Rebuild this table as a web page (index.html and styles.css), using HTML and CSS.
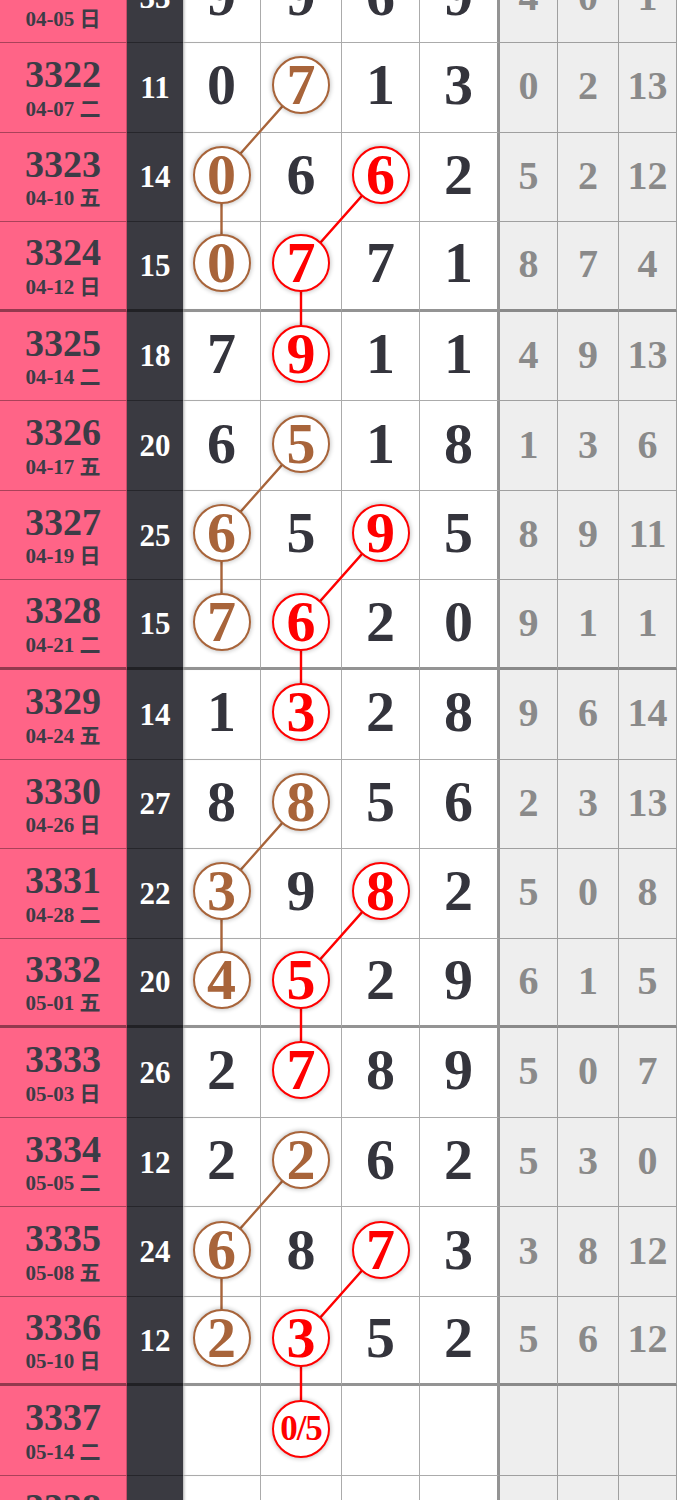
FILE: index.html
```html
<!DOCTYPE html>
<html lang="zh">
<head>
<meta charset="utf-8">
<title>走势图</title>
<link rel="stylesheet" href="styles.css">
</head>
<body>
<div class="board">
  <div class="row"><div class="c-no"><span class="no">3321</span><span class="date">04-05 日</span></div><div class="c-sum">33</div><div class="c-w">9</div><div class="c-w">9</div><div class="c-w">6</div><div class="c-w last">9</div><div class="c-g">4</div><div class="c-g">0</div><div class="c-g">1</div></div>
  <div class="row"><div class="c-no"><span class="no">3322</span><span class="date">04-07 二</span></div><div class="c-sum">11</div><div class="c-w">0</div><div class="c-w"><span class="ring brown">7</span></div><div class="c-w">1</div><div class="c-w last">3</div><div class="c-g">0</div><div class="c-g">2</div><div class="c-g">13</div></div>
  <div class="row"><div class="c-no"><span class="no">3323</span><span class="date">04-10 五</span></div><div class="c-sum">14</div><div class="c-w"><span class="ring brown">0</span></div><div class="c-w">6</div><div class="c-w"><span class="ring red">6</span></div><div class="c-w last">2</div><div class="c-g">5</div><div class="c-g">2</div><div class="c-g">12</div></div>
  <div class="row end"><div class="c-no"><span class="no">3324</span><span class="date">04-12 日</span></div><div class="c-sum">15</div><div class="c-w"><span class="ring brown">0</span></div><div class="c-w"><span class="ring red">7</span></div><div class="c-w">7</div><div class="c-w last">1</div><div class="c-g">8</div><div class="c-g">7</div><div class="c-g">4</div></div>
  <div class="row"><div class="c-no"><span class="no">3325</span><span class="date">04-14 二</span></div><div class="c-sum">18</div><div class="c-w">7</div><div class="c-w"><span class="ring red">9</span></div><div class="c-w">1</div><div class="c-w last">1</div><div class="c-g">4</div><div class="c-g">9</div><div class="c-g">13</div></div>
  <div class="row"><div class="c-no"><span class="no">3326</span><span class="date">04-17 五</span></div><div class="c-sum">20</div><div class="c-w">6</div><div class="c-w"><span class="ring brown">5</span></div><div class="c-w">1</div><div class="c-w last">8</div><div class="c-g">1</div><div class="c-g">3</div><div class="c-g">6</div></div>
  <div class="row"><div class="c-no"><span class="no">3327</span><span class="date">04-19 日</span></div><div class="c-sum">25</div><div class="c-w"><span class="ring brown">6</span></div><div class="c-w">5</div><div class="c-w"><span class="ring red">9</span></div><div class="c-w last">5</div><div class="c-g">8</div><div class="c-g">9</div><div class="c-g">11</div></div>
  <div class="row end"><div class="c-no"><span class="no">3328</span><span class="date">04-21 二</span></div><div class="c-sum">15</div><div class="c-w"><span class="ring brown">7</span></div><div class="c-w"><span class="ring red">6</span></div><div class="c-w">2</div><div class="c-w last">0</div><div class="c-g">9</div><div class="c-g">1</div><div class="c-g">1</div></div>
  <div class="row"><div class="c-no"><span class="no">3329</span><span class="date">04-24 五</span></div><div class="c-sum">14</div><div class="c-w">1</div><div class="c-w"><span class="ring red">3</span></div><div class="c-w">2</div><div class="c-w last">8</div><div class="c-g">9</div><div class="c-g">6</div><div class="c-g">14</div></div>
  <div class="row"><div class="c-no"><span class="no">3330</span><span class="date">04-26 日</span></div><div class="c-sum">27</div><div class="c-w">8</div><div class="c-w"><span class="ring brown">8</span></div><div class="c-w">5</div><div class="c-w last">6</div><div class="c-g">2</div><div class="c-g">3</div><div class="c-g">13</div></div>
  <div class="row"><div class="c-no"><span class="no">3331</span><span class="date">04-28 二</span></div><div class="c-sum">22</div><div class="c-w"><span class="ring brown">3</span></div><div class="c-w">9</div><div class="c-w"><span class="ring red">8</span></div><div class="c-w last">2</div><div class="c-g">5</div><div class="c-g">0</div><div class="c-g">8</div></div>
  <div class="row end"><div class="c-no"><span class="no">3332</span><span class="date">05-01 五</span></div><div class="c-sum">20</div><div class="c-w"><span class="ring brown">4</span></div><div class="c-w"><span class="ring red">5</span></div><div class="c-w">2</div><div class="c-w last">9</div><div class="c-g">6</div><div class="c-g">1</div><div class="c-g">5</div></div>
  <div class="row"><div class="c-no"><span class="no">3333</span><span class="date">05-03 日</span></div><div class="c-sum">26</div><div class="c-w">2</div><div class="c-w"><span class="ring red">7</span></div><div class="c-w">8</div><div class="c-w last">9</div><div class="c-g">5</div><div class="c-g">0</div><div class="c-g">7</div></div>
  <div class="row"><div class="c-no"><span class="no">3334</span><span class="date">05-05 二</span></div><div class="c-sum">12</div><div class="c-w">2</div><div class="c-w"><span class="ring brown">2</span></div><div class="c-w">6</div><div class="c-w last">2</div><div class="c-g">5</div><div class="c-g">3</div><div class="c-g">0</div></div>
  <div class="row"><div class="c-no"><span class="no">3335</span><span class="date">05-08 五</span></div><div class="c-sum">24</div><div class="c-w"><span class="ring brown">6</span></div><div class="c-w">8</div><div class="c-w"><span class="ring red">7</span></div><div class="c-w last">3</div><div class="c-g">3</div><div class="c-g">8</div><div class="c-g">12</div></div>
  <div class="row end"><div class="c-no"><span class="no">3336</span><span class="date">05-10 日</span></div><div class="c-sum">12</div><div class="c-w"><span class="ring brown">2</span></div><div class="c-w"><span class="ring red">3</span></div><div class="c-w">5</div><div class="c-w last">2</div><div class="c-g">5</div><div class="c-g">6</div><div class="c-g">12</div></div>
  <div class="row"><div class="c-no"><span class="no">3337</span><span class="date">05-14 二</span></div><div class="c-sum"></div><div class="c-w"></div><div class="c-w"><span class="ring red small">0/5</span></div><div class="c-w"></div><div class="c-w last"></div><div class="c-g"></div><div class="c-g"></div><div class="c-g"></div></div>
  <div class="row"><div class="c-no"><span class="no">3338</span><span class="date">05-17 五</span></div><div class="c-sum"></div><div class="c-w"></div><div class="c-w"></div><div class="c-w"></div><div class="c-w last"></div><div class="c-g"></div><div class="c-g"></div><div class="c-g"></div></div>

  <svg class="links" width="677" height="1613" viewBox="0 0 677 1613" aria-hidden="true">
    <g fill="none" stroke="#a8643a" stroke-width="2.4">
      <polyline points="301,132.34 221.5,221.91 221.5,311.47"/>
      <polyline points="301,490.59 221.5,580.16 221.5,669.72"/>
      <polyline points="301,848.84 221.5,938.41 221.5,1027.97"/>
      <polyline points="301,1207.09 221.5,1296.66 221.5,1386.22"/>
    </g>
    <g fill="none" stroke="#ff0000" stroke-width="2.4">
      <polyline points="380.5,221.91 301,311.47 301,401.03"/>
      <polyline points="380.5,580.16 301,669.72 301,759.28"/>
      <polyline points="380.5,938.41 301,1027.97 301,1117.53"/>
      <polyline points="380.5,1296.66 301,1386.22 301,1475.78"/>
    </g>
  </svg>
</div>
</body>
</html>
```

FILE: styles.css
```css
html, body {
  margin: 0;
  padding: 0;
  overflow: hidden;
  background: #ffffff;
}

.board {
  position: relative;
  width: 677px;
  margin-top: -46.56px;
  font-family: "Liberation Serif", "Noto Sans CJK SC", serif;
  font-weight: bold;
}

.row {
  display: grid;
  grid-template-columns: 127px 56px 78px 81px 78px 80px 58px 61px 58px;
  height: 89.5625px;
}

.row > div {
  box-sizing: border-box;
  border-bottom: 1px solid rgba(0, 0, 0, 0.33);
  display: flex;
  align-items: center;
  justify-content: center;
  min-width: 0;
}

.row.end > div {
  border-bottom: 3px solid rgba(0, 0, 0, 0.42);
}

.c-no {
  background: #ff6487;
  color: #3c3c46;
  flex-direction: column;
  gap: 5.6px;
  border-right: 1px solid rgba(0, 0, 0, 0.22);
}

.c-no .no {
  font-size: 38px;
  line-height: 38px;
}

.c-no .date {
  font-size: 21px;
  line-height: 21px;
  white-space: nowrap;
}

.c-sum {
  background: #3a3a41;
  color: #ffffff;
  font-size: 31px;
  line-height: 1;
}

.c-w {
  background: #ffffff;
  color: #34343c;
  font-size: 58px;
  line-height: 1;
  border-right: 1px solid rgba(0, 0, 0, 0.33);
  padding-bottom: 4px;
}

.row > .c-w:nth-child(3) {
  box-shadow: inset 3px 0 3px -2px rgba(0, 0, 0, 0.35);
}

.row > .c-w.last {
  border-right: 3px solid rgba(0, 0, 0, 0.42);
}

.c-g {
  background: #eeeeee;
  color: #8a8a8a;
  font-size: 40px;
  line-height: 1;
  border-right: 1px solid rgba(0, 0, 0, 0.33);
  padding-bottom: 2px;
}

.ring {
  position: relative;
  z-index: 2;
  box-sizing: border-box;
  width: 58px;
  height: 58px;
  border-radius: 50%;
  border: 2px solid currentColor;
  background: #ffffff;
  display: flex;
  align-items: center;
  justify-content: center;
  line-height: 1;
  box-shadow: 0 0 4px 1px rgba(0, 0, 0, 0.22);
}

.ring.brown {
  color: #a8643a;
}

.ring.red {
  color: #ff0000;
}

.ring.small {
  font-size: 35px;
  letter-spacing: -1px;
}

.links {
  position: absolute;
  left: 0;
  top: 0;
  z-index: 1;
  pointer-events: none;
}
```
